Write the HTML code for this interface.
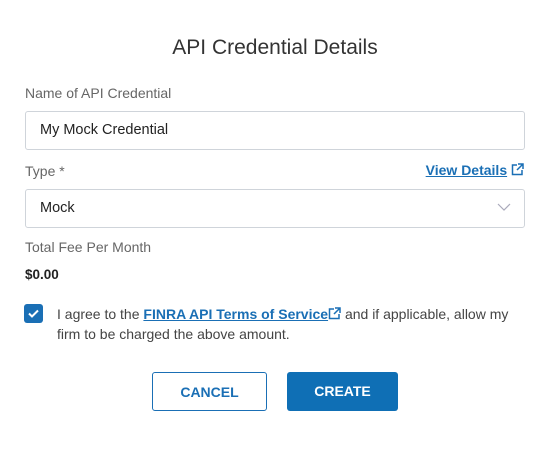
<!DOCTYPE html>
<html><head><style>
body{margin:0;width:550px;height:457px;background:#fff;font-family:"Liberation Sans",sans-serif;color:#333;position:relative;overflow:hidden}
.a{position:absolute}
.lbl{font-size:14px;color:#666}
.box{position:absolute;left:25px;height:37px;border:1px solid #cfd4da;border-radius:3px;font-size:14.5px;color:#222;line-height:37px;padding-left:14px;box-sizing:content-box;width:484px}
a{color:#1a6fb5;text-decoration:underline}
.btn{position:absolute;top:372px;height:39px;border-radius:3px;font-size:14px;font-weight:bold;text-align:center;line-height:39px;box-sizing:border-box}
</style></head><body>
<div class="a" style="top:36px;left:0;width:550px;text-align:center;font-size:21px;color:#333">API Credential Details</div>
<div class="a lbl" style="left:25px;top:85px">Name of API Credential</div>
<div class="box" style="top:111px">My Mock Credential</div>
<div class="a lbl" style="left:25px;top:163px">Type *</div>
<div class="a" style="right:26px;top:162px;font-size:14px;font-weight:bold"><a>View Details</a>
<svg width="13" height="13" viewBox="0 0 13 13" style="vertical-align:-1px"><path d="M6 2H1.5v9.5H11V7" fill="none" stroke="#1a6fb5" stroke-width="1.5"/><path d="M7 1h5v5M12 1L6 7" fill="none" stroke="#1a6fb5" stroke-width="1.5"/></svg></div>
<div class="box" style="top:189px">Mock</div>
<svg class="a" style="left:497px;top:203px" width="14" height="9"><path d="M1 1l6 6 6-6" fill="none" stroke="#aab" stroke-width="1.2"/></svg>
<div class="a lbl" style="left:25px;top:239px">Total Fee Per Month</div>
<div class="a" style="left:25px;top:267px;font-size:13.5px;font-weight:bold;color:#222">$0.00</div>
<div class="a" style="left:24px;top:304px;width:19px;height:19px;background:#1a6fb5;border-radius:3px"><svg width="19" height="19"><path d="M5 9.5l3 3 6-6" fill="none" stroke="#fff" stroke-width="2"/></svg></div>
<div class="a" style="left:57px;top:304px;width:468px;font-size:14px;line-height:20px;color:#444;white-space:nowrap">I agree to the <a style="font-weight:bold">FINRA API Terms of Service</a><svg width="13" height="13" viewBox="0 0 13 13" style="vertical-align:-1px"><path d="M6 2H1.5v9.5H11V7" fill="none" stroke="#1a6fb5" stroke-width="1.5"/><path d="M7 1h5v5M12 1L6 7" fill="none" stroke="#1a6fb5" stroke-width="1.5"/></svg> and if applicable, allow my<br>firm to be charged the above amount.</div>
<div class="btn" style="left:152px;width:115px;border:1px solid #1a6fb5;color:#1a6fb5">CANCEL</div>
<div class="btn" style="left:287px;width:111px;background:#0f6fb5;color:#fff">CREATE</div>
</body></html>
